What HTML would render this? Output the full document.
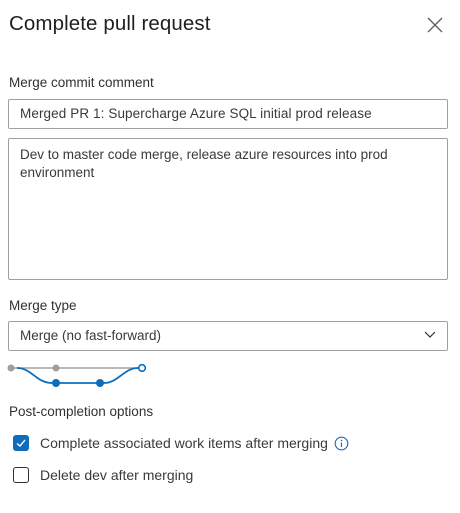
<!DOCTYPE html>
<html><head><style>
body{margin:0;width:460px;height:513px;background:#fff;font-family:"Liberation Sans",sans-serif;color:#201f1e;position:relative;overflow:hidden}
.a{position:absolute}
.lbl{font-size:13.5px;color:#323130}
.box{border:1px solid #a19f9d;border-radius:2px;box-sizing:border-box;left:8px;width:440px}
.t{font-size:13.5px;color:#3b3a39}
</style></head><body>
<div class="a" style="left:9px;top:12px;font-size:20.5px;font-weight:400;color:#201f1e;letter-spacing:0.1px">Complete pull request</div>
<svg class="a" style="left:427px;top:17px" width="16" height="16"><path d="M1 1L15 15M15 1L1 15" stroke="#605e5c" stroke-width="1.3"/></svg>
<div class="a lbl" style="left:9px;top:75px">Merge commit comment</div>
<div class="a box" style="top:99px;height:30px"></div>
<div class="a t" style="left:20px;top:106px;letter-spacing:0.1px">Merged PR 1: Supercharge Azure SQL initial prod release</div>
<div class="a box" style="top:138px;height:142px"></div>
<div class="a t" style="left:20px;top:146px;width:420px;line-height:18px">Dev to master code merge, release azure resources into prod environment</div>
<div class="a lbl" style="left:9px;top:298px">Merge type</div>
<div class="a box" style="top:321px;height:30px"></div>
<div class="a t" style="left:20px;top:328px">Merge (no fast-forward)</div>
<svg class="a" style="left:424px;top:331px" width="12" height="8"><path d="M1 1L6 6L11 1" stroke="#323130" fill="none" stroke-width="1.2"/></svg>
<svg class="a" style="left:0;top:355px" width="160" height="40">
<path d="M14 13H139" stroke="#a19f9d" stroke-width="1.5"/>
<circle cx="11" cy="13" r="3.5" fill="#a19f9d"/>
<circle cx="56" cy="13" r="3.5" fill="#a19f9d"/>
<path d="M17 13C32 13 36 28 52 28H104C118 28 124 13 138 13" stroke="#0f6cbd" stroke-width="1.8" fill="none"/>
<circle cx="56" cy="28" r="4" fill="#0f6cbd"/>
<circle cx="100" cy="28" r="4" fill="#0f6cbd"/>
<circle cx="142" cy="13" r="3.3" fill="#fff" stroke="#0f6cbd" stroke-width="1.6"/>
</svg>
<div class="a lbl" style="left:9px;top:404px">Post-completion options</div>
<div class="a" style="left:13px;top:435px;width:16px;height:16px;background:#0f6cbd;border-radius:3px"></div>
<svg class="a" style="left:13px;top:435px" width="16" height="16"><path d="M4 8.5L7 11L12 5" stroke="#fff" stroke-width="1.4" fill="none"/></svg>
<div class="a t" style="left:40px;top:435px;font-size:14px">Complete associated work items after merging</div>
<svg class="a" style="left:334px;top:436px" width="15" height="15"><circle cx="7.5" cy="7.5" r="6.3" fill="none" stroke="#0f6cbd" stroke-width="1.1"/><path d="M7.5 6.5V11" stroke="#0f6cbd" stroke-width="1.2"/><circle cx="7.5" cy="4.4" r=".8" fill="#0f6cbd"/></svg>
<div class="a" style="left:13px;top:467px;width:16px;height:16px;border:1px solid #323130;border-radius:3px;box-sizing:border-box"></div>
<div class="a t" style="left:40px;top:467px;font-size:14px">Delete dev after merging</div>
</body></html>
